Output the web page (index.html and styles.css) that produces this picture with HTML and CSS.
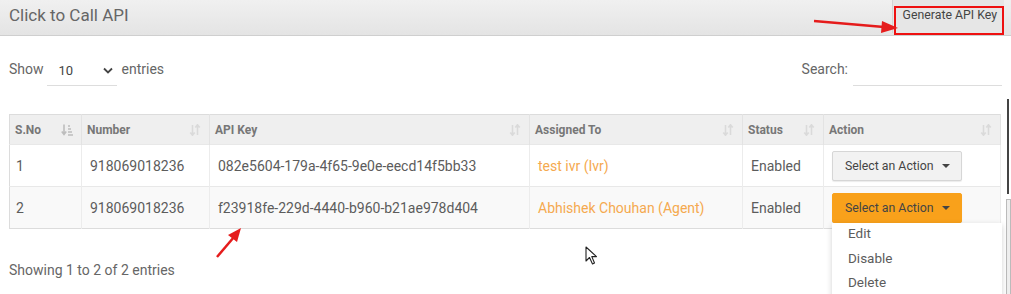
FILE: index.html
```html
<!DOCTYPE html>
<html lang="en">
<head>
  <meta charset="UTF-8">
  <title>Click to Call API</title>
  <link rel="stylesheet" href="styles.css">
</head>
<body>

  <!-- Cabecera del panel -->
  <div class="panel-head">
    <h1 class="panel-title">Click to Call API</h1>
    <button class="btn-generate">Generate API Key</button>
    <div class="mark-box"></div>
    <svg class="arrow arrow-top" width="90" height="16" viewBox="0 0 90 16">
      <line x1="2" y1="4" x2="72" y2="10" stroke="#e51c1c" stroke-width="2.5"/>
      <polygon points="86,11 70,4 69,16" fill="#e51c1c"/>
    </svg>
  </div>

  <!-- Controles de la tabla -->
  <div class="controls">
    <label class="length">
      Show
      <span class="length-select">10
        <svg width="10" height="7" viewBox="0 0 10 7"><path d="M1 1.5 L5 5.5 L9 1.5" fill="none" stroke="#444" stroke-width="1.8"/></svg>
      </span>
      entries
    </label>
    <label class="search">
      Search:
      <span class="search-input"></span>
    </label>
  </div>

  <div class="table-wrap">
    <table class="data">
      <thead>
        <tr>
          <th class="c-sno">S.No
            <svg class="sort sort-on" width="12" height="12" viewBox="0 0 12 12"><path d="M3 0.5 V10 M0.8 7.5 L3 10.5 L5.2 7.5" fill="none" stroke="#bdbdbd" stroke-width="1.6"/><path d="M7 2 H9 M7 5 H10 M7 8 H11 M7 11 H12" stroke="#bdbdbd" stroke-width="1.4"/></svg>
          </th>
          <th class="c-num">Number <svg class="sort" width="12" height="12" viewBox="0 0 12 12"><path d="M3.5 1 V11 M1.3 8.5 L3.5 11.2 L5.7 8.5 M8.5 11 V1 M6.3 3.5 L8.5 0.8 L10.7 3.5" fill="none" stroke="#dadada" stroke-width="1.6"/></svg></th>
          <th class="c-key">API Key <svg class="sort" width="12" height="12" viewBox="0 0 12 12"><path d="M3.5 1 V11 M1.3 8.5 L3.5 11.2 L5.7 8.5 M8.5 11 V1 M6.3 3.5 L8.5 0.8 L10.7 3.5" fill="none" stroke="#dadada" stroke-width="1.6"/></svg></th>
          <th class="c-to">Assigned To <svg class="sort" width="12" height="12" viewBox="0 0 12 12"><path d="M3.5 1 V11 M1.3 8.5 L3.5 11.2 L5.7 8.5 M8.5 11 V1 M6.3 3.5 L8.5 0.8 L10.7 3.5" fill="none" stroke="#dadada" stroke-width="1.6"/></svg></th>
          <th class="c-st">Status <svg class="sort" width="12" height="12" viewBox="0 0 12 12"><path d="M3.5 1 V11 M1.3 8.5 L3.5 11.2 L5.7 8.5 M8.5 11 V1 M6.3 3.5 L8.5 0.8 L10.7 3.5" fill="none" stroke="#dadada" stroke-width="1.6"/></svg></th>
          <th class="c-act">Action <svg class="sort" width="12" height="12" viewBox="0 0 12 12"><path d="M3.5 1 V11 M1.3 8.5 L3.5 11.2 L5.7 8.5 M8.5 11 V1 M6.3 3.5 L8.5 0.8 L10.7 3.5" fill="none" stroke="#dadada" stroke-width="1.6"/></svg></th>
        </tr>
      </thead>
      <tbody>
        <tr>
          <td>1</td>
          <td>918069018236</td>
          <td>082e5604-179a-4f65-9e0e-eecd14f5bb33</td>
          <td class="link">test ivr (Ivr)</td>
          <td>Enabled</td>
          <td><button class="btn-action">Select an Action <span class="caret"></span></button></td>
        </tr>
        <tr class="odd">
          <td>2</td>
          <td>918069018236</td>
          <td>f23918fe-229d-4440-b960-b21ae978d404</td>
          <td class="link">Abhishek Chouhan (Agent)</td>
          <td>Enabled</td>
          <td class="act-cell">
            <button class="btn-action open">Select an Action <span class="caret"></span></button>
            <ul class="menu">
              <li>Edit</li>
              <li>Disable</li>
              <li>Delete</li>
            </ul>
          </td>
        </tr>
      </tbody>
    </table>
    <svg class="arrow arrow-key" width="30" height="34" viewBox="0 0 30 34">
      <line x1="3" y1="31" x2="20" y2="11" stroke="#e51c1c" stroke-width="2.5"/>
      <polygon points="27,2 14,9 23,16" fill="#e51c1c"/>
    </svg>
    <svg class="cursor" width="14" height="20" viewBox="0 0 14 20">
      <path d="M1 1 L1 15 L4.5 11.5 L7.5 18 L9.5 17 L6.8 10.6 L11.5 10.6 Z" fill="#fff" stroke="#222" stroke-width="1.1" stroke-linejoin="round"/>
    </svg>
  </div>

  <div class="info">Showing 1 to 2 of 2 entries</div>

  <!-- Barra lateral derecha -->
  <div class="edge edge-dark"></div>
  <div class="edge edge-light"></div>

</body>
</html>
```

FILE: styles.css
```css
/* Estilos generales */
body {
  margin: 0;
  width: 1011px;
  height: 294px;
  overflow: hidden;
  position: relative;
  background: #fff;
  font-family: Roboto, "Liberation Sans", sans-serif;
  color: #5c5c5c;
}

/* Cabecera */
.panel-head {
  position: relative;
  height: 35px;
  display: flex;
  align-items: center;
  justify-content: space-between;
  padding: 0 7px 0 9px;
  background: linear-gradient(#f0f0f0, #e4e4e4);
  border-bottom: 1px solid #cfcfcf;
}

.panel-title {
  margin: 0 0 6px;
  font-size: 17px;
  font-weight: 400;
  color: #666;
}

.btn-generate {
  align-self: flex-start;
  height: 33px;
  padding: 0 7px 3px 10px;
  border: none;
  border-left: 1px solid #d4d4d4;
  background: #e6e6e6;
  font-family: inherit;
  font-size: 12.3px;
  color: #444;
}

.mark-box {
  position: absolute;
  left: 894px;
  top: 6px;
  width: 106px;
  height: 25px;
  border: 2.5px solid #ee1111;
}

.arrow {
  position: absolute;
}

.arrow-top {
  left: 812px;
  top: 17px;
}

/* Controles */
.controls {
  display: flex;
  justify-content: space-between;
  align-items: center;
  height: 34px;
  margin-top: 16px;
  padding: 0 9px;
  font-size: 14px;
  color: #666;
}

.length,
.search {
  display: flex;
  align-items: center;
}

.length-select {
  display: flex;
  align-items: center;
  justify-content: space-between;
  width: 54px;
  height: 30px;
  margin: 3px 5px 0 3px;
  padding: 0 4px 0 12px;
  border-bottom: 1px solid #ddd;
  font-size: 13px;
  color: #444;
}

.search-input {
  display: block;
  width: 149px;
  height: 30px;
  margin-left: 5px;
  margin-top: 3px;
  border-bottom: 1px solid #ddd;
}

/* Tabla */
.table-wrap {
  position: relative;
  margin: 28px 0 0 9px;
  width: 992px;
}

.data {
  width: 100%;
  border-collapse: collapse;
  border: 1px solid #dcdcdc;
  font-size: 14px;
}

.data th {
  position: relative;
  height: 29px;
  padding: 0 5px;
  background: #efefef;
  border-right: 1px solid #e3e3e3;
  text-align: left;
  font-size: 12px;
  font-weight: 700;
  color: #777;
}

.data td {
  height: 41px;
  padding: 0 8px;
  border-right: 1px solid #ececec;
  border-top: 1px solid #e8e8e8;
  color: #5c5c5c;
}

.data td:first-child {
  padding-left: 6px;
}

.data tr.odd td {
  background: #f9f9f9;
}

.data td.link {
  color: #f5a94f;
}

.c-sno { width: 61px; }
.c-num { width: 117px; }
.c-key { width: 309px; }
.c-to { width: 202px; }
.c-st { width: 70px; }

.sort {
  position: absolute;
  right: 8px;
  top: 9px;
}

/* Botones de acción */
.btn-action {
  display: flex;
  align-items: center;
  gap: 8px;
  height: 30px;
  padding: 0 11px 0 12px;
  border: 1px solid #d6d6d6;
  border-radius: 2px;
  background: #f2f2f2;
  font-family: inherit;
  font-size: 12.3px;
  color: #444;
  box-shadow: 0 1px 1px rgba(0, 0, 0, 0.08);
}

.btn-action.open {
  background: #f9a11b;
  border-color: #f9a11b;
}

.caret {
  width: 0;
  height: 0;
  border-left: 4px solid transparent;
  border-right: 4px solid transparent;
  border-top: 4px solid #444;
}

.act-cell {
  position: relative;
}

.menu {
  position: absolute;
  left: 8px;
  top: 36px;
  width: 170px;
  height: 80px;
  margin: 0;
  padding: 0;
  list-style: none;
  background: #fff;
  box-shadow: 0 2px 6px rgba(0, 0, 0, 0.18);
  z-index: 2;
}

.menu li {
  height: 23.5px;
  padding: 1px 0 0 16px;
  font-size: 13.5px;
  color: #5c5c5c;
  line-height: 19px;
}

.arrow-key {
  left: 205px;
  top: 112px;
}

.cursor {
  position: absolute;
  left: 576px;
  top: 132px;
}

/* Pie */
.info {
  margin: 33px 0 0 9px;
  font-size: 14px;
  color: #666;
}

/* Bordes de la derecha */
.edge {
  position: absolute;
  right: 2px;
  width: 2px;
}

.edge-dark {
  top: 99px;
  height: 95px;
  background: #444;
}

.edge-light {
  top: 199px;
  height: 95px;
  border: 1px solid #bbb;
  width: 3px;
  right: 0;
  background: #eee;
}
```
